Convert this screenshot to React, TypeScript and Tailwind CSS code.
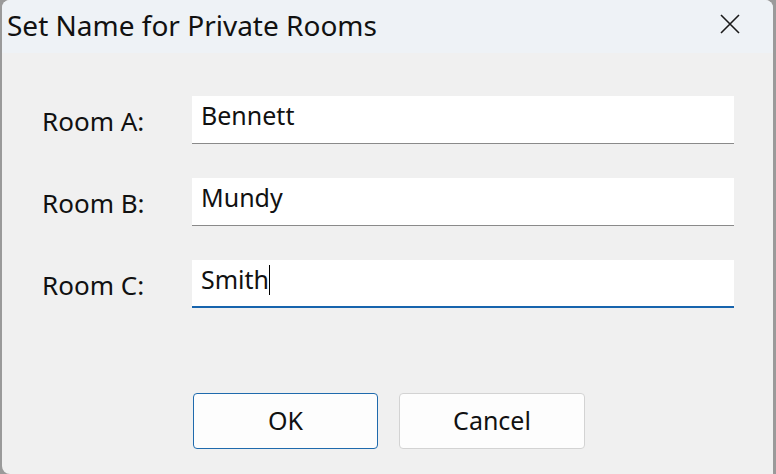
import React from "react";

const rooms = [
  { label: "Room A:", value: "Bennett" },
  { label: "Room B:", value: "Mundy" },
  { label: "Room C:", value: "Smith", focused: true },
];

export const App = () => {
  return (
    <div className="w-[776px] h-[474px] bg-[#9a9a9a] overflow-hidden font-['Noto_Sans',sans-serif] text-[#111]">
      <div className="ml-[2px] mr-[3px] h-full rounded-t-[8px] rounded-bl-[8px] bg-[#f0f0f0] overflow-hidden flex flex-col">
        {/* title bar */}
        <div className="h-[53px] bg-[#eef2f6] flex items-center justify-between pl-[5px] pr-[33px]">
          <p className="text-[28px] leading-none pb-[3px]">Set Name for Private Rooms</p>
          <svg width="20" height="20" viewBox="0 0 20 20" className="mb-[5px]">
            <path d="M1 1 L19 19 M19 1 L1 19" stroke="#1a1a1a" strokeWidth="1.6" fill="none" />
          </svg>
        </div>

        {/* fields */}
        <div className="flex flex-col gap-[34px] pt-[43px] pl-[40px]">
          {rooms.map((r) => (
            <div key={r.label} className="flex items-center">
              <p className="w-[150px] text-[26px] pt-[3px]">{r.label}</p>
              <div
                className={
                  r.focused
                    ? "w-[542px] h-[48px] bg-white border-b-2 border-[#1764ad] pl-[9px] flex items-start pt-[1px] text-[25px]"
                    : "w-[542px] h-[48px] bg-white border-b border-[#8a8a8a] pl-[9px] flex items-start pt-[1px] text-[25px]"
                }
              >
                <span>{r.value}</span>
                {r.focused && <span className="w-px h-[30px] bg-black mt-[4px]" />}
              </div>
            </div>
          ))}
        </div>

        {/* buttons */}
        <div className="flex gap-[21px] pl-[191px] pt-[85px]">
          <button className="w-[185px] h-[56px] rounded-[4px] bg-[#fdfdfd] border border-[#1f6aad] text-[25px]">
            OK
          </button>
          <button className="w-[186px] h-[56px] rounded-[4px] bg-[#fdfdfd] border border-[#d3d3d3] text-[25px]">
            Cancel
          </button>
        </div>
      </div>
    </div>
  );
};

export default App;
